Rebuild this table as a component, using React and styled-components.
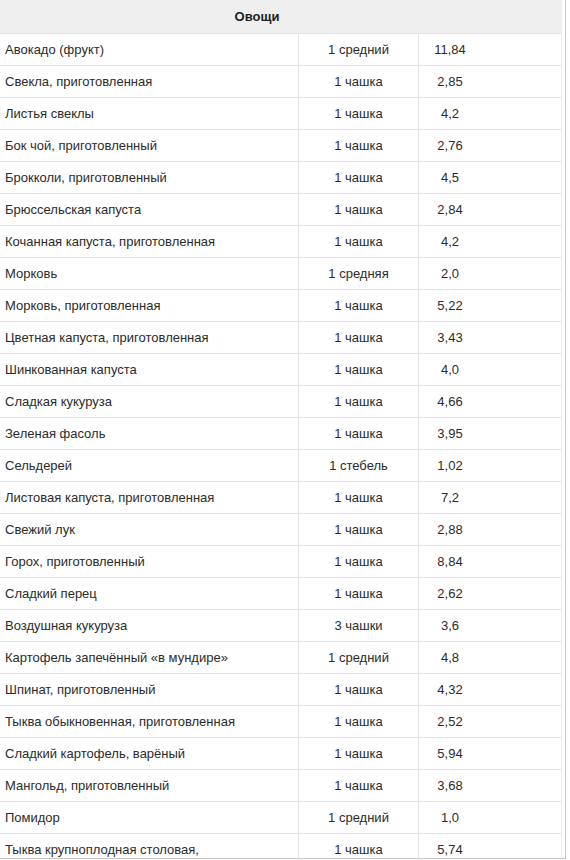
import React from 'react';
import styled, { createGlobalStyle } from 'styled-components';

const rows = [
  ['Авокадо (фрукт)', '1 средний', '11,84'],
  ['Свекла, приготовленная', '1 чашка', '2,85'],
  ['Листья свеклы', '1 чашка', '4,2'],
  ['Бок чой, приготовленный', '1 чашка', '2,76'],
  ['Брокколи, приготовленный', '1 чашка', '4,5'],
  ['Брюссельская капуста', '1 чашка', '2,84'],
  ['Кочанная капуста, приготовленная', '1 чашка', '4,2'],
  ['Морковь', '1 средняя', '2,0'],
  ['Морковь, приготовленная', '1 чашка', '5,22'],
  ['Цветная капуста, приготовленная', '1 чашка', '3,43'],
  ['Шинкованная капуста', '1 чашка', '4,0'],
  ['Сладкая кукуруза', '1 чашка', '4,66'],
  ['Зеленая фасоль', '1 чашка', '3,95'],
  ['Сельдерей', '1 стебель', '1,02'],
  ['Листовая капуста, приготовленная', '1 чашка', '7,2'],
  ['Свежий лук', '1 чашка', '2,88'],
  ['Горох, приготовленный', '1 чашка', '8,84'],
  ['Сладкий перец', '1 чашка', '2,62'],
  ['Воздушная кукуруза', '3 чашки', '3,6'],
  ['Картофель запечённый «в мундире»', '1 средний', '4,8'],
  ['Шпинат, приготовленный', '1 чашка', '4,32'],
  ['Тыква обыкновенная, приготовленная', '1 чашка', '2,52'],
  ['Сладкий картофель, варёный', '1 чашка', '5,94'],
  ['Мангольд, приготовленный', '1 чашка', '3,68'],
  ['Помидор', '1 средний', '1,0'],
  ['Тыква крупноплодная столовая,', '1 чашка', '5,74'],
];

const GlobalStyle = createGlobalStyle`
  html, body {
    margin: 0;
    padding: 0;
    background: #ffffff;
  }
  body {
    font-family: "Liberation Sans", Arial, sans-serif;
    font-size: 13px;
    color: #2b2b2b;
  }
`;

const Frame = styled.div`
  width: 565px;
  height: 858px;
  overflow: hidden;
  border-right: 1px solid #c9c9c9;
  border-bottom: 1px solid #c9c9c9;
`;

const Table = styled.div`
  width: 561px;
  border-right: 1px solid #ececec;
`;

const Header = styled.div`
  height: 33px;
  display: flex;
  align-items: center;
  justify-content: center;
  padding-right: 47px;
  background: #efefef;
  border-bottom: 1px solid #e2e2e2;
  font-weight: bold;
  color: #222;
`;

const Row = styled.div`
  display: grid;
  grid-template-columns: 298px 120px 1fr;
  height: 31px;
  border-bottom: 1px solid #e4e4e4;
`;

const Cell = styled.div`
  display: flex;
  align-items: center;
  justify-content: ${p => (p.$left ? 'flex-start' : 'center')};
  padding-left: ${p => (p.$left ? '5px' : '0')};
  padding-right: ${p => p.$pr || 0}px;
  border-left: ${p => (p.$left ? 'none' : '1px solid #e4e4e4')};
  white-space: nowrap;
`;

export default function App() {
  return (
    <>
      <GlobalStyle />
      <Frame>
        <Table>
          <Header>Овощи</Header>
          {rows.map(([name, amount, value]) => (
            <Row key={name}>
              <Cell $left>{name}</Cell>
              <Cell>{amount}</Cell>
              <Cell $pr={80}>{value}</Cell>
            </Row>
          ))}
        </Table>
      </Frame>
    </>
  );
}
